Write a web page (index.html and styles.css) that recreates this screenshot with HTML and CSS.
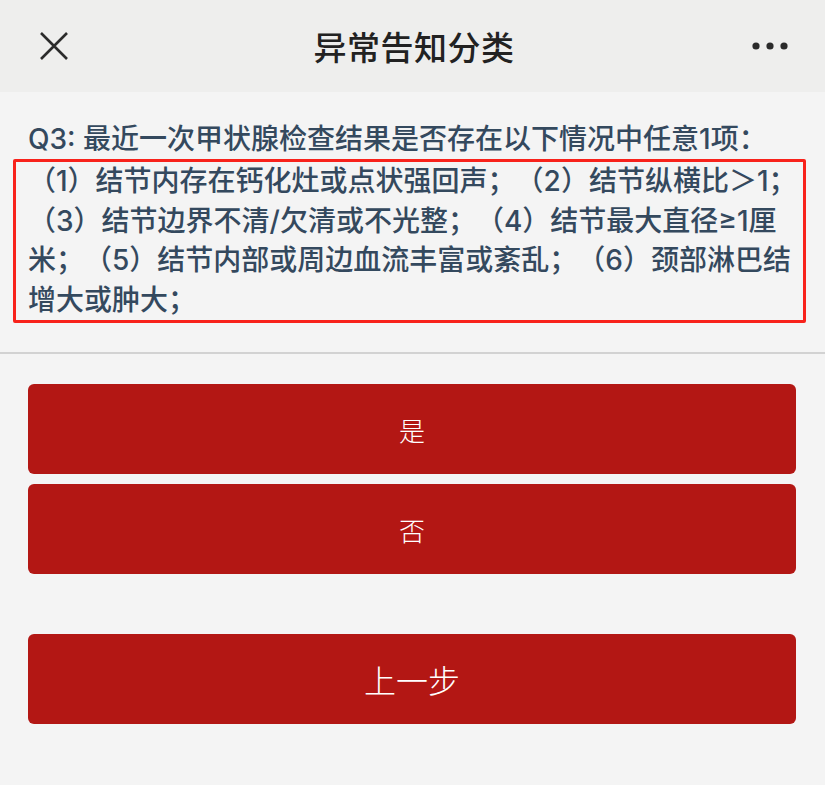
FILE: index.html
```html
<!DOCTYPE html>
<html lang="zh-CN">
<head>
  <meta charset="UTF-8">
  <meta name="viewport" content="width=device-width, initial-scale=1.0">
  <title>异常告知分类</title>
  <link rel="stylesheet" href="styles.css">
</head>
<body>

<header class="topbar">
  <button class="icon-btn close" aria-label="关闭">
    <svg width="28" height="28" viewBox="0 0 28 28">
      <path d="M1 1 L27 27 M27 1 L1 27" stroke="#2b2b2b" stroke-width="2.6" fill="none"/>
    </svg>
  </button>
  <h1 class="title">异常告知分类</h1>
  <button class="icon-btn more" aria-label="更多">
    <svg width="36" height="10" viewBox="0 0 36 10">
      <circle cx="4" cy="5" r="3.6" fill="#2b2b2b"/>
      <circle cx="18" cy="5" r="3.6" fill="#2b2b2b"/>
      <circle cx="32" cy="5" r="3.6" fill="#2b2b2b"/>
    </svg>
  </button>
</header>

<main>
  <section class="question">
    <p class="q-title">Q3: 最近一次甲状腺检查结果是否存在以下情况中任意1项：</p>
    <div class="q-detail">（1）结节内存在钙化灶或点状强回声；（2）结节纵横比＞1；（3）结节边界不清/欠清或不光整；（4）结节最大直径≥1厘米；（5）结节内部或周边血流丰富或紊乱；（6）颈部淋巴结增大或肿大；</div>
  </section>

  <section class="answers">
    <button class="btn">是</button>
    <button class="btn">否</button>
    <button class="btn btn-back">上一步</button>
  </section>
</main>

</body>
</html>
```

FILE: styles.css
```css
:root {
  --red: #b31714;
  --text-main: #34495e;
  --header-bg: #eeeeed;
  --background: #f4f4f4;
}

body {
  margin: 0;
  font-family: Inter, "Noto Sans CJK SC", sans-serif;
  background-color: var(--background);
  color: var(--text-main);
}

.topbar {
  height: 92px;
  background-color: var(--header-bg);
  display: grid;
  grid-template-columns: 1fr auto 1fr;
  align-items: center;
  padding: 0 37px 0 40px;
}

.icon-btn {
  background: none;
  border: none;
  padding: 0;
  display: flex;
  cursor: pointer;
}

.close {
  justify-self: start;
}

.more {
  justify-self: end;
}

.title {
  margin: 0;
  font-size: 33px;
  font-weight: 500;
  color: #222;
  letter-spacing: 0.5px;
}

.question {
  padding: 27px 19px 29px 13px;
  border-bottom: 2px solid #d2d2d2;
  font-size: 28px;
  line-height: 40px;
  font-weight: 500;
  text-spacing-trim: space-all;
}

.q-title {
  margin: 0;
  padding-left: 15px;
}

.q-detail {
  border: 3px solid #f8221b;
  border-radius: 2px;
  padding: 0 5px 0 12px;
  line-height: 39.5px;
}

.answers {
  display: flex;
  flex-direction: column;
  padding: 30px 29px 0 28px;
}

.btn {
  height: 90px;
  margin-bottom: 10px;
  border: none;
  border-radius: 6px;
  background-color: var(--red);
  color: #fff;
  font-family: "Noto Sans CJK SC", sans-serif;
  font-size: 26px;
  font-weight: 300;
  cursor: pointer;
}

.btn-back {
  margin-top: 50px;
  font-size: 32px;
}
```
